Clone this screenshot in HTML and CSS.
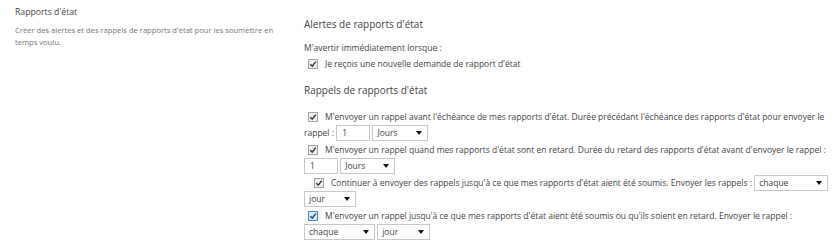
FILE: index.html
```html
<!DOCTYPE html>
<html lang="fr">
<head>
<meta charset="utf-8">
<title>Rapports d'état</title>
<link rel="stylesheet" href="styles.css">
</head>
<body>
<div class="page">
  <div class="side">
    <div class="side-title">Rapports d'état</div>
    <div class="side-desc">Créer des alertes et des rappels de rapports d'état pour les soumettre en temps voulu.</div>
  </div>
  <div class="main">
    <div class="sec-title">Alertes de rapports d'état</div>
    <div class="intro">M'avertir immédiatement lorsque&nbsp;:</div>
    <div class="opt"><svg class="cb" width="10" height="10" viewBox="0 0 10 10"><rect x="0.5" y="0.5" width="9" height="9" fill="#f0f0f0" stroke="#a3a3a3"/><path d="M2.3 5.1 L4.2 7.2 L7.8 2.6" fill="none" stroke="#333333" stroke-width="1.4"/></svg>Je reçois une nouvelle demande de rapport d'état</div>

    <div class="sec-title sec-2">Rappels de rapports d'état</div>
    <div class="row"><svg class="cb" width="10" height="10" viewBox="0 0 10 10"><rect x="0.5" y="0.5" width="9" height="9" fill="#f0f0f0" stroke="#a3a3a3"/><path d="M2.3 5.1 L4.2 7.2 L7.8 2.6" fill="none" stroke="#333333" stroke-width="1.4"/></svg>M'envoyer un rappel avant l'échéance de mes rapports d'état. Durée précédant l'échéance des rapports d'état pour envoyer le rappel&nbsp;: <span class="txt w34">1</span> <span class="sel w56">Jours</span></div>
    <div class="row"><svg class="cb" width="10" height="10" viewBox="0 0 10 10"><rect x="0.5" y="0.5" width="9" height="9" fill="#f0f0f0" stroke="#a3a3a3"/><path d="M2.3 5.1 L4.2 7.2 L7.8 2.6" fill="none" stroke="#333333" stroke-width="1.4"/></svg>M'envoyer un rappel quand mes rapports d'état sont en retard. Durée du retard des rapports d'état avant d'envoyer le rappel&nbsp;: <span class="txt w34">1</span> <span class="sel w55">Jours</span></div>
    <div class="row"><svg class="cb cb-indent" width="10" height="10" viewBox="0 0 10 10"><rect x="0.5" y="0.5" width="9" height="9" fill="#f0f0f0" stroke="#a3a3a3"/><path d="M2.3 5.1 L4.2 7.2 L7.8 2.6" fill="none" stroke="#333333" stroke-width="1.4"/></svg>Continuer à envoyer des rappels jusqu'à ce que mes rapports d'état aient été soumis. Envoyer les rappels&nbsp;: <span class="sel w74">chaque</span> <span class="sel w52">jour</span></div>
    <div class="row"><svg class="cb" width="10" height="10" viewBox="0 0 10 10"><rect x="0.5" y="0.5" width="9" height="9" fill="#d9eafb" stroke="#4a8ac4"/><path d="M2.3 5.1 L4.2 7.2 L7.8 2.6" fill="none" stroke="#1f3f66" stroke-width="1.4"/></svg>M'envoyer un rappel jusqu'à ce que mes rapports d'état aient été soumis ou qu'ils soient en retard. Envoyer le rappel&nbsp;: <span class="sel w71">chaque</span> <span class="sel w53">jour</span></div>
  </div>
</div>
</body>
</html>
```

FILE: styles.css
```css
html, body {
  margin: 0;
  padding: 0;
  background: #ffffff;
}

body {
  font-family: "Open Sans", "Noto Sans", "Liberation Sans", sans-serif;
  color: #444444;
}

.page {
  display: flex;
  align-items: flex-start;
}

.side {
  flex: none;
  width: 304px;
  box-sizing: border-box;
  padding: 4px 14px 0 15px;
}

.side-title {
  font-size: 8.7px;
  line-height: 16px;
  color: #444444;
}

.side-desc {
  margin-top: 5px;
  width: 275px;
  font-size: 7.6px;
  line-height: 11.5px;
  color: #777777;
}

.main {
  flex: none;
  width: 530px;
  padding-top: 16px;
  font-size: 8.5px;
  line-height: 16px;
}

.sec-title {
  font-size: 10px;
  line-height: 16px;
  color: #444444;
  margin-bottom: 8px;
}

.sec-2 {
  margin-top: 10px;
  margin-bottom: 11px;
}

.opt, .row {
  line-height: 16px;
}

.row {
  margin-bottom: 1px;
}

.cb {
  display: inline-block;
  vertical-align: top;
  margin: 3px 7px 0 4px;
}

.cb-indent {
  margin-left: 10px;
}

.txt, .sel {
  display: inline-block;
  vertical-align: top;
  box-sizing: border-box;
  height: 16px;
  line-height: 14px;
  border: 1px solid #c8c8c8;
  background: #ffffff;
  color: #444444;
  white-space: nowrap;
}

.txt {
  padding-left: 5px;
}

.sel {
  position: relative;
  padding-left: 4px;
}

.sel::after {
  content: "";
  position: absolute;
  right: 5px;
  top: 5px;
  border-left: 3px solid transparent;
  border-right: 3px solid transparent;
  border-top: 4px solid #111111;
}

.w34 { width: 34px; }
.w52 { width: 52px; }
.w53 { width: 53px; }
.w55 { width: 55px; }
.w56 { width: 56px; }
.w71 { width: 71px; }
.w74 { width: 74px; }
```
